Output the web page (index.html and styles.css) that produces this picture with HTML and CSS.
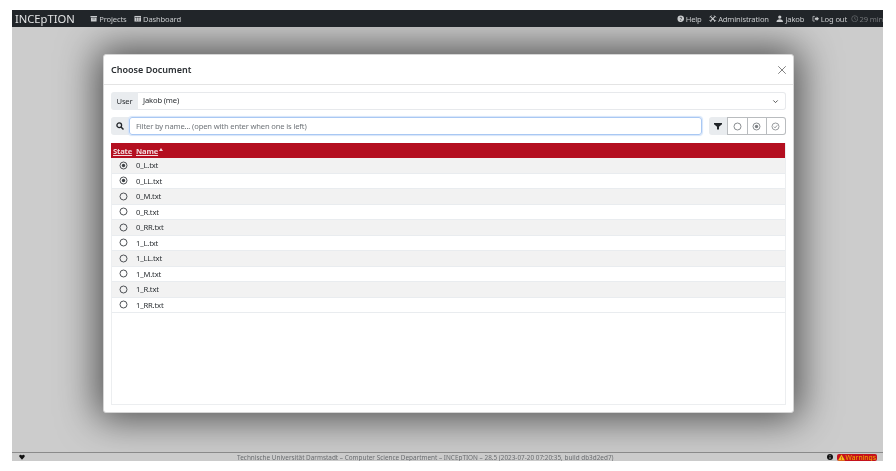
FILE: index.html
```html
<!DOCTYPE html>
<html lang="en">
<head>
<meta charset="utf-8">
<title>INCEpTION</title>
<link rel="stylesheet" href="styles.css">
</head>
<body>
<svg class="sprites" width="0" height="0" aria-hidden="true">
  <symbol id="i-circle" viewBox="0 0 16 16"><circle cx="8" cy="8" r="6.2" fill="none" stroke="currentColor" stroke-width="1.6"/></symbol>
  <symbol id="i-dot" viewBox="0 0 16 16"><circle cx="8" cy="8" r="6.2" fill="none" stroke="currentColor" stroke-width="1.6"/><circle cx="8" cy="8" r="3" fill="currentColor"/></symbol>
  <symbol id="i-check" viewBox="0 0 16 16"><circle cx="8" cy="8" r="6.2" fill="none" stroke="currentColor" stroke-width="1.4"/><path d="M5 8.2l2.2 2.2L11 6" fill="none" stroke="currentColor" stroke-width="1.4"/></symbol>
</svg>
<div class="app">
  <nav class="navbar">
    <span class="brand">INCEpTION</span>
    <a class="nav-link"><svg class="ni" viewBox="0 0 16 16"><path fill="currentColor" d="M1 2h14v3H1zM2 6h12v8H2z"/><path fill="#212529" d="M5 8h6v1H5z"/></svg>Projects</a>
    <a class="nav-link"><svg class="ni" viewBox="0 0 16 16"><path fill="currentColor" d="M1 2h14v12H1z"/><path fill="#212529" d="M5.500 5h1v8h-1zM10 5h1v8h-1zM2 4.500h12v.6H2z"/></svg>Dashboard</a>
    <span class="nav-spacer"></span>
    <a class="nav-link"><svg class="ni" viewBox="0 0 16 16"><circle cx="8" cy="8" r="7" fill="currentColor"/><path d="M5.800 6.300C6 4.600 10.200 4.500 10.200 6.500c0 1.500-2.200 1.400-2.200 3" fill="none" stroke="#212529" stroke-width="1.500"/><path fill="#212529" d="M7.200 10.600h1.600v1.600H7.200z"/></svg>Help</a>
    <a class="nav-link"><svg class="ni" viewBox="0 0 16 16"><path d="M3 3l10 10M13 3L3 13" stroke="currentColor" stroke-width="2.400"/><path d="M1 5l4-4M11 1l4 4M1 11l4 4M11 15l4-4" stroke="currentColor" stroke-width="1.800"/></svg>Administration</a>
    <a class="nav-link"><svg class="ni" viewBox="0 0 16 16"><circle cx="8" cy="4.500" r="3.500" fill="currentColor"/><path fill="currentColor" d="M1 15c0-4 3-6 7-6s7 2 7 6z"/></svg>Jakob</a>
    <a class="nav-link"><svg class="ni" viewBox="0 0 16 16"><path d="M6 3H2v10h4" fill="none" stroke="currentColor" stroke-width="1.500"/><path fill="currentColor" d="M6 6h4V3l5 5-5 5v-3H6z"/></svg>Log out</a>
    <span class="timer"><svg class="ni" viewBox="0 0 16 16"><circle cx="8" cy="8" r="6.500" fill="none" stroke="currentColor" stroke-width="1.300"/><path d="M8 4v4.300l3 1.500" fill="none" stroke="currentColor" stroke-width="1.200"/></svg>29 min</span>
  </nav>
  <main class="page"></main>
  <footer class="footer">
    <svg class="heart" viewBox="0 0 16 16"><path fill="currentColor" d="M8 15L1 7.500C-.5 4 3.500 0 8 4c4.500-4 8.500 0 7 3.500z"/></svg>
    <span class="foot-text">Technische Universität Darmstadt – Computer Science Department – INCEpTION – 28.5 (2023-07-20 07:20:35, build db3d2ed7)</span>
    <svg class="info" viewBox="0 0 16 16"><circle cx="8" cy="8" r="8" fill="currentColor"/><path fill="#ccc" d="M7 3.500h2v2H7zM7 7h2v6H7z"/></svg>
    <span class="warn"><svg class="tri" viewBox="0 0 16 16"><path fill="#f5c518" d="M8 1l8 14H0z"/><path fill="#b5101f" d="M7.300 6h1.400v5H7.300zM7.300 12h1.400v1.500H7.300z"/></svg>Warnings</span>
  </footer>
  <div class="backdrop"></div>
  <section class="modal">
    <header class="modal-head">
      <h2 class="modal-title">Choose Document</h2>
      <svg class="close" viewBox="0 0 16 16"><path d="M2 2l12 12M14 2L2 14" stroke="currentColor" stroke-width="1.300"/></svg>
    </header>
    <div class="modal-body">
      <div class="input-row">
        <span class="addon">User</span>
        <div class="select">Jakob (me)
          <svg class="chev" viewBox="0 0 16 16"><path d="M3 5.500l5 5 5-5" fill="none" stroke="currentColor" stroke-width="2"/></svg>
        </div>
      </div>
      <div class="filter-row">
        <span class="addon addon-icon"><svg class="mag" viewBox="0 0 16 16"><circle cx="6.500" cy="6.500" r="4.700" fill="none" stroke="currentColor" stroke-width="2.600"/><path d="M10 10l5 5" stroke="currentColor" stroke-width="3"/></svg></span>
        <div class="filter-input">Filter by name... (open with enter when one is left)</div>
        <div class="btn-group">
          <span class="fbtn fbtn-on"><svg class="funnel" viewBox="0 0 16 16"><path fill="currentColor" d="M0 2h16v2.500L10 9.500V15H6V9.500L0 4.500z"/></svg></span>
          <span class="fbtn"><svg class="fi"><use href="#i-circle"/></svg></span>
          <span class="fbtn"><svg class="fi"><use href="#i-dot"/></svg></span>
          <span class="fbtn"><svg class="fi"><use href="#i-check"/></svg></span>
        </div>
      </div>
      <div class="table-wrap">
        <div class="thead">
          <a class="th th-state">State</a>
          <a class="th">Name</a><span class="sort"></span>
        </div>
        <div class="row"><span class="state"><svg class="ri"><use href="#i-dot"/></svg></span><span class="name">0_L.txt</span></div>
        <div class="row"><span class="state"><svg class="ri"><use href="#i-dot"/></svg></span><span class="name">0_LL.txt</span></div>
        <div class="row"><span class="state"><svg class="ri"><use href="#i-circle"/></svg></span><span class="name">0_M.txt</span></div>
        <div class="row"><span class="state"><svg class="ri"><use href="#i-circle"/></svg></span><span class="name">0_R.txt</span></div>
        <div class="row"><span class="state"><svg class="ri"><use href="#i-circle"/></svg></span><span class="name">0_RR.txt</span></div>
        <div class="row"><span class="state"><svg class="ri"><use href="#i-circle"/></svg></span><span class="name">1_L.txt</span></div>
        <div class="row"><span class="state"><svg class="ri"><use href="#i-circle"/></svg></span><span class="name">1_LL.txt</span></div>
        <div class="row"><span class="state"><svg class="ri"><use href="#i-circle"/></svg></span><span class="name">1_M.txt</span></div>
        <div class="row"><span class="state"><svg class="ri"><use href="#i-circle"/></svg></span><span class="name">1_R.txt</span></div>
        <div class="row"><span class="state"><svg class="ri"><use href="#i-circle"/></svg></span><span class="name">1_RR.txt</span></div>
      </div>
    </div>
  </section>
</div>
</body>
</html>
```

FILE: styles.css
```css
* { box-sizing: border-box; }
html, body { margin: 0; height: 100%; }
body {
  background: #fff;
  padding: 10px 13px 10px 12px;
  font-family: "Noto Sans", "Open Sans", sans-serif;
  font-size: 7.600px;
  letter-spacing: -.15px;
  color: #212529;
  overflow: hidden;
}
.sprites { position: absolute; }
.app {
  position: relative;
  height: 451px;
  display: flex;
  flex-direction: column;
  overflow: hidden;
  background: #fff;
  filter: blur(.3px);
}
.navbar {
  flex: none;
  height: 17px;
  background: #212529;
  color: #c9cbcd;
  display: flex;
  align-items: center;
  padding: 0 0 0 3px;
  gap: 7.500px;
  position: relative;
  z-index: 3;
}
.brand { font-size: 11.200px; color: #e3e4e5; margin-right: 8px; letter-spacing: 0; }
.nav-link { display: inline-flex; align-items: center; gap: 1.500px; white-space: nowrap; }
.ni { width: 7.500px; height: 7.500px; flex: none; }
.nav-spacer { flex: 1; }
.timer { display: inline-flex; align-items: center; gap: 1px; color: #75787b; white-space: nowrap; margin-left: -3.500px; }
.page { flex: 1; background: #fff; }
.footer {
  flex: none;
  height: 9px;
  border-top: 1px solid #8a8a8a;
  display: flex;
  align-items: center;
  padding: 0 6px 0 6px;
  position: relative;
  z-index: 3;
  background: #cbcbcb;
  letter-spacing: 0;
}
.heart { width: 8px; height: 6px; color: #111; flex: none; }
.foot-text { flex: 1; text-align: center; color: #6a6d70; font-size: 6.400px; white-space: nowrap; padding-right: 2px; }
.info { width: 6px; height: 6px; color: #111; flex: none; margin-right: 4px; }
.warn {
  display: inline-flex; align-items: center; gap: 1px;
  background: #c5121c; color: #f0b000; border-radius: 2px;
  padding: 0 1px; height: 7px; font-size: 6.800px; line-height: 7px;
}
.tri { width: 7px; height: 7px; }
.backdrop { position: absolute; inset: 0; background: rgba(0,0,0,.2); z-index: 1; }
.modal {
  position: absolute;
  left: 91px; top: 44px;
  width: 691px; height: 359px;
  background: #fff;
  border-radius: 3px;
  border: 1px solid #d5d5d5;
  box-shadow: 0 0 38px 6px rgba(0,0,0,.62);
  z-index: 2;
  display: flex;
  flex-direction: column;
}
.modal-head {
  flex: none;
  height: 30px;
  border-bottom: 1px solid #e4e4e4;
  display: flex;
  align-items: center;
  justify-content: space-between;
  padding: 0 6px 0 7px;
}
.modal-title { margin: 0; font-size: 9px; font-weight: 600; color: #2a2e32; letter-spacing: 0; }
.close { width: 10px; height: 10px; color: #666; }
.modal-body {
  flex: 1;
  min-height: 0;
  padding: 7px;
  display: flex;
  flex-direction: column;
}
.input-row { display: flex; height: 18px; flex: none; }
.addon {
  background: #e9ecef;
  border-radius: 3px 0 0 3px;
  display: flex; align-items: center; justify-content: center;
  color: #2b2f33;
}
.input-row .addon { width: 27px; }
.select {
  flex: 1;
  border: 1px solid #e7e9ec;
  border-left: 0;
  border-radius: 0 3px 3px 0;
  display: flex; align-items: center; justify-content: space-between;
  padding: 0 6px 2px 5px;
  color: #2b2f33;
}
.chev { width: 7px; height: 7px; color: #444; margin-top: 2px; }
.filter-row { display: flex; height: 18px; flex: none; margin-top: 7px; }
.addon-icon { width: 18px; height: 18px; }
.mag { width: 8px; height: 8px; color: #212529; }
.filter-input {
  width: 573px;
  border: 1.500px solid #a9c8f3;
  border-radius: 3px;
  box-shadow: 0 0 1px 1px #d6e5fa;
  display: flex; align-items: center;
  padding-left: 6px;
  color: #6f7479;
}
.btn-group { display: flex; margin-left: 7px; height: 18px; }
.fbtn {
  width: 19.250px;
  border: 1px solid #b9bcbf;
  border-left: 0;
  display: flex; align-items: center; justify-content: center;
  color: #7d8185;
}
.fbtn:last-child { border-radius: 0 3px 3px 0; }
.fbtn-on { background: #e9ecef; border: 0; border-radius: 3px 0 0 3px; border-right: 1px solid #b9bcbf; color: #212529; }
.funnel { width: 8px; height: 8px; }
.fi { width: 9px; height: 9px; }
.table-wrap {
  flex: 1;
  min-height: 0;
  margin-top: 8px;
  border: 1px solid #eceef0;
  border-top: 0;
}
.thead {
  height: 15px;
  background: #b40f20;
  color: #fff;
  display: flex;
  align-items: center;
  margin-left: -1px;
  padding-left: 2px;
  font-weight: 700;
}
.th { text-decoration: underline; color: #f3dadd; }
.th-state { width: 23px; }
.sort { margin-left: 1px; margin-bottom: 2px; border: 2.500px solid transparent; border-top: 0; border-bottom: 3px solid #f3dadd; }
.row {
  height: 15.500px;
  display: flex;
  align-items: center;
  border-bottom: 1px solid #e9ecef;
  color: #2b2f33;
}
.row:nth-child(even) { background: #f2f2f2; }
.state { width: 23px; display: flex; justify-content: center; }
.ri { width: 9px; height: 9px; color: #3d4145; }
.name { padding-left: 1px; }
```
